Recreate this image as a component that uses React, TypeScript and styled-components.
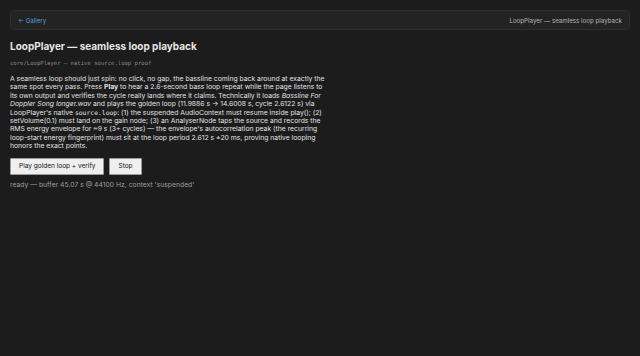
import styled, { createGlobalStyle } from "styled-components";

const GlobalStyle = createGlobalStyle`
  html, body {
    margin: 0;
    padding: 0;
    background: #1c1c1c;
  }
  body {
    font-family: Inter, "Noto Sans", "Liberation Sans", sans-serif;
    color: #e4e4e4;
  }
`;

const Page = styled.div`
  padding: 10px;
  min-height: 356px;
  box-sizing: border-box;
`;

const NavBar = styled.nav`
  display: flex;
  align-items: center;
  justify-content: space-between;
  height: 20px;
  padding: 0 7px;
  box-sizing: border-box;
  background: #232323;
  border: 1px solid #2e2e2e;
  border-radius: 4px;
  font-size: 6.2px;
`;

const BackLink = styled.a`
  color: #5a9fd8;
  text-decoration: none;
`;

const NavTitle = styled.span`
  color: #b5b5b5;
`;

const Title = styled.h1`
  margin: 9px 0 0;
  font-size: 10px;
  font-weight: 700;
  color: #e6e6e6;
  line-height: 14px;
`;

const Subtitle = styled.div`
  margin-top: 7px;
  font-family: "DejaVu Sans Mono", "Liberation Mono", monospace;
  font-size: 5.6px;
  color: #8a8a8a;
`;

const Description = styled.p`
  margin: 9px 0 0;
  max-width: 318px;
  font-size: 6.8px;
  line-height: 8.4px;
  color: #e2e2e2;
`;

const Code = styled.code`
  font-family: "DejaVu Sans Mono", "Liberation Mono", monospace;
  font-size: 6.4px;
`;

const Actions = styled.div`
  display: flex;
  gap: 5px;
  margin-top: 7px;
`;

const Button = styled.button`
  height: 17px;
  padding: 0 8px;
  background: #efefef;
  border: 1px solid #9a9a9a;
  border-radius: 1px;
  font-family: Inter, "Noto Sans", "Liberation Sans", sans-serif;
  font-size: 6.5px;
  color: #111;
`;

const Status = styled.div`
  margin-top: 5px;
  font-size: 6.8px;
  color: #9c9c9c;
`;

export default function App() {
  return (
    <>
      <GlobalStyle />
      <Page>
        <NavBar>
          <BackLink href="#">← Gallery</BackLink>
          <NavTitle>LoopPlayer — seamless loop playback</NavTitle>
        </NavBar>
        <Title>LoopPlayer — seamless loop playback</Title>
        <Subtitle>core/LoopPlayer — native source.loop proof</Subtitle>
        <Description>
          A seamless loop should just spin: no click, no gap, the bassline coming back around
          at exactly the same spot every pass. Press <b>Play</b> to hear a 2.6-second bass loop
          repeat while the page listens to its own output and verifies the cycle really lands
          where it claims. Technically it loads <i>Bassline For Doppler Song longer.wav</i> and
          plays the golden loop (11.9886 s → 14.6008 s, cycle 2.6122 s) via LoopPlayer's native{" "}
          <Code>source.loop</Code>: (1) the suspended AudioContext must resume inside play(); (2)
          setVolume(0.1) must land on the gain node; (3) an AnalyserNode taps the source and
          records the RMS energy envelope for ~9 s (3+ cycles) — the envelope's autocorrelation
          peak (the recurring loop-start energy fingerprint) must sit at the loop period 2.612 s
          ±20 ms, proving native looping honors the exact points.
        </Description>
        <Actions>
          <Button>Play golden loop + verify</Button>
          <Button>Stop</Button>
        </Actions>
        <Status>ready — buffer 45.07 s @ 44100 Hz, context 'suspended'</Status>
      </Page>
    </>
  );
}
